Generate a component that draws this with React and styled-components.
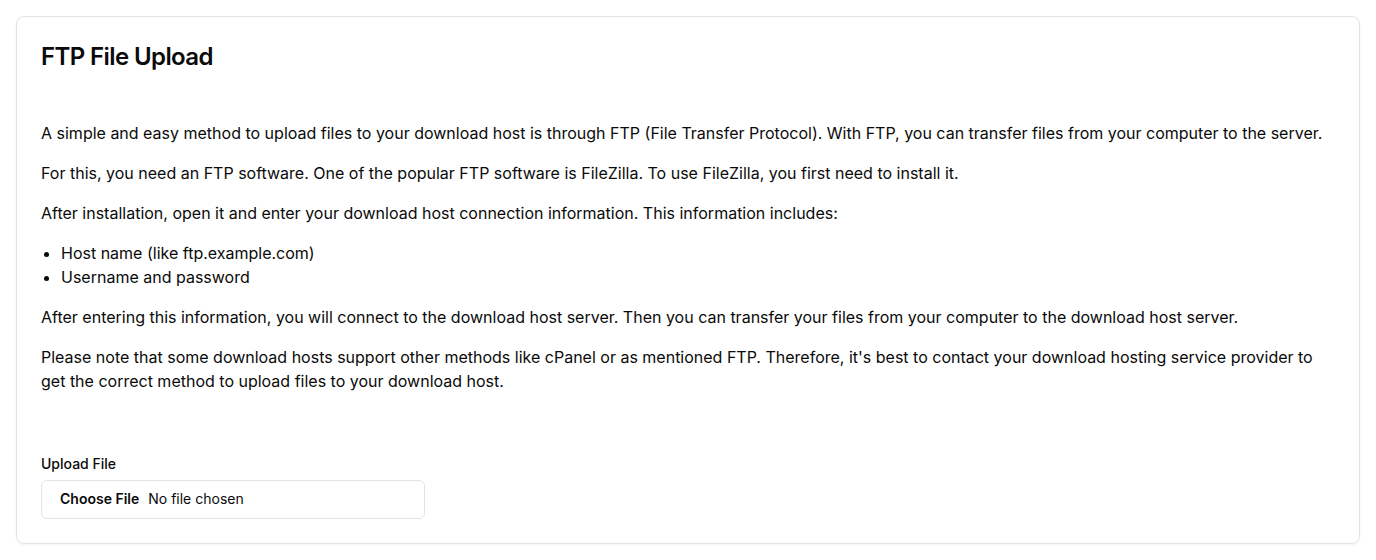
import React from "react";
import styled, { createGlobalStyle } from "styled-components";

const GlobalStyle = createGlobalStyle`
  * { box-sizing: border-box; }
  body {
    margin: 0;
    background: #ffffff;
    font-family: Inter, "Noto Sans", sans-serif;
    color: #0a0a0a;
  }
`;

const Page = styled.div`
  padding: 16px;
`;

const Card = styled.section`
  border: 1px solid #e4e4e7;
  border-radius: 8px;
  background: #fff;
  box-shadow: 0 1px 2px rgba(0, 0, 0, 0.05);
  padding: 24px;
`;

const Title = styled.h2`
  margin: 0;
  font-size: 24px;
  line-height: 32px;
  font-weight: 600;
  letter-spacing: -0.6px;
`;

const Body = styled.div`
  margin-top: 48px;
  font-size: 16px;
  line-height: 24px;

  p {
    margin: 0 0 16px;
  }
  p:last-child {
    margin-bottom: 0;
  }
`;

const List = styled.ul`
  margin: 0 0 16px;
  padding-left: 20px;
`;

const Field = styled.div`
  margin-top: 61px;
  display: flex;
  flex-direction: column;
  gap: 6px;
`;

const Label = styled.label`
  font-size: 14px;
  line-height: 20px;
  font-weight: 500;
`;

const FileInput = styled.input`
  width: 384px;
  height: 39px;
  border: 1px solid #e4e4e7;
  border-radius: 6px;
  background: #fff;
  padding: 8px 12px 9px 18px;
  line-height: 20px;
  font-family: Inter, "Noto Sans", sans-serif;
  font-size: 14px;
  color: #0a0a0a;

  &::file-selector-button {
    border: 0;
    background: transparent;
    padding: 0;
    margin: 0 9px 0 0;
    font-family: Inter, "Noto Sans", sans-serif;
    font-size: 14px;
    line-height: 20px;
    font-weight: 600;
    color: #0a0a0a;
  }
`;

export default function App() {
  return (
    <>
      <GlobalStyle />
      <Page>
        <Card>
          <Title>FTP File Upload</Title>
          <Body>
            <p>
              A simple and easy method to upload files to your download host is through FTP (File Transfer
              Protocol). With FTP, you can transfer files from your computer to the server.
            </p>
            <p>
              For this, you need an FTP software. One of the popular FTP software is FileZilla. To use FileZilla,
              you first need to install it.
            </p>
            <p>After installation, open it and enter your download host connection information. This information includes:</p>
            <List>
              <li>Host name (like ftp.example.com)</li>
              <li>Username and password</li>
            </List>
            <p>
              After entering this information, you will connect to the download host server. Then you can transfer
              your files from your computer to the download host server.
            </p>
            <p>
              Please note that some download hosts support other methods like cPanel or as mentioned FTP.
              Therefore, it's best to contact your download hosting service provider to get the correct method to
              upload files to your download host.
            </p>
          </Body>
          <Field>
            <Label htmlFor="ftp-file">Upload File</Label>
            <FileInput id="ftp-file" type="file" />
          </Field>
        </Card>
      </Page>
    </>
  );
}
